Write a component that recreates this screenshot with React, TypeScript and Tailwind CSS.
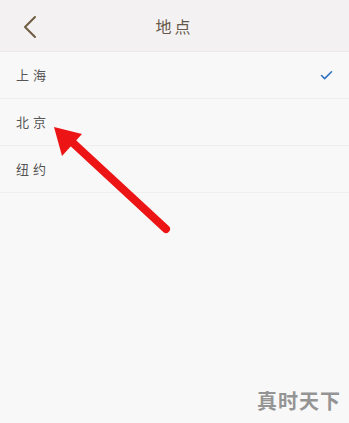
import { Check } from 'lucide-react';

const cities = [
  { name: '上海', selected: true },
  { name: '北京', selected: false },
  { name: '纽约', selected: false },
];

export default function App() {
  return (
    <div
      className="relative w-[349px] h-[423px] overflow-hidden bg-[#f9f8f8]"
      style={{ fontFamily: '"Noto Sans CJK SC", "Noto Sans", sans-serif' }}
    >
      {/* Header */}
      <div className="relative h-[52px] flex items-center justify-center bg-[#f3f1f1] border-b border-[#ece9e9]">
        <svg
          className="absolute left-[22px] top-[15px]"
          width="16"
          height="24"
          viewBox="0 0 16 24"
          fill="none"
        >
          <path d="M13 2 L3 12 L13 22" stroke="#6e5d42" strokeWidth="2" strokeLinecap="round" strokeLinejoin="round" />
        </svg>
        <span className="text-[16px] text-[#66584a] tracking-[3px]">地点</span>
      </div>

      {/* List */}
      <div className="flex flex-col">
        {cities.map((c) => (
          <div
            key={c.name}
            className="h-[47px] flex items-center justify-between pl-[16px] pr-[15px] border-b border-[#f0eeee]"
          >
            <span className="text-[13px] text-[#555] tracking-[4px]">{c.name}</span>
            {c.selected && <Check size={15} strokeWidth={2.5} className="text-[#2f6fc0]" />}
          </div>
        ))}
      </div>

      {/* Red arrow annotation */}
      <svg className="absolute left-0 top-0" width="349" height="423" viewBox="0 0 349 423">
        <line x1="166" y1="229" x2="72" y2="142" stroke="#ec1414" strokeWidth="8" strokeLinecap="round" />
        <polygon points="54,127 82,134 62,156" fill="#ec1414" />
      </svg>

      {/* Watermark */}
      <div className="absolute right-[8px] bottom-[7px] text-[20px] font-bold text-[#949494] tracking-[1px]">
        真时天下
      </div>
    </div>
  );
}
